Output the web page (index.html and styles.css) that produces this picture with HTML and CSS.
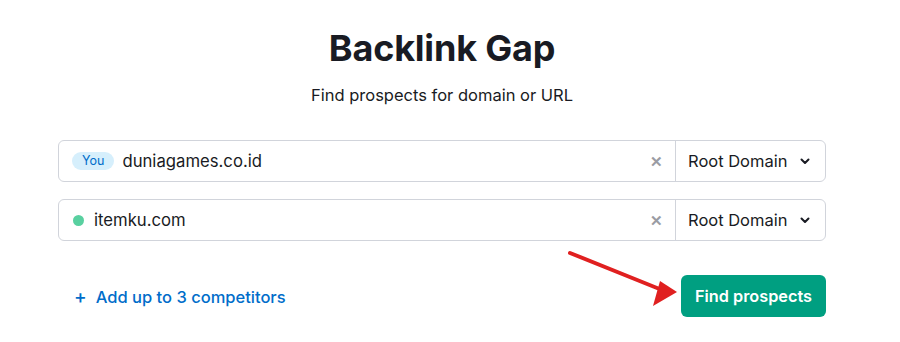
FILE: index.html
```html
<!DOCTYPE html>
<html lang="en">
<head>
    <meta charset="UTF-8">
    <title>Backlink Gap</title>
    <link rel="stylesheet" href="styles.css">
</head>
<body>
    <div class="page">
        <h1 class="title">Backlink Gap</h1>
        <p class="subtitle">Find prospects for domain or URL</p>

        <div class="domainRow">
            <div class="domainInput">
                <span class="badge">You</span>
                <span class="domainText">duniagames.co.id</span>
                <span class="clear">&#x2715;</span>
            </div>
            <div class="typeSelect">
                <span>Root Domain</span>
                <svg class="chevron" width="10" height="7" viewBox="0 0 10 7"><path d="M1.5 1.5l3.5 3.5 3.5-3.5" fill="none" stroke="#191b23" stroke-width="2" stroke-linecap="round" stroke-linejoin="round"/></svg>
            </div>
        </div>

        <div class="domainRow">
            <div class="domainInput">
                <span class="dot"></span>
                <span class="domainText">itemku.com</span>
                <span class="clear">&#x2715;</span>
            </div>
            <div class="typeSelect">
                <span>Root Domain</span>
                <svg class="chevron" width="10" height="7" viewBox="0 0 10 7"><path d="M1.5 1.5l3.5 3.5 3.5-3.5" fill="none" stroke="#191b23" stroke-width="2" stroke-linecap="round" stroke-linejoin="round"/></svg>
            </div>
        </div>

        <div class="actions">
            <a class="addLink" href="#"><span class="plus">+</span>Add up to 3 competitors</a>
            <button class="findBtn">Find prospects</button>
        </div>
    </div>

    <!-- fleche rouge d'annotation -->
    <svg class="arrow" width="120" height="62" viewBox="0 0 120 62">
        <line x1="4" y1="4" x2="96" y2="41" stroke="#e02020" stroke-width="4" stroke-linecap="round"/>
        <polygon points="111,43 87,57 94,32" fill="#e02020"/>
    </svg>
</body>
</html>
```

FILE: styles.css
```css
body {
    margin: 0;
    background: #fff;
    font-family: Inter, "Noto Sans", sans-serif;
    color: #191b23;
    position: relative;
}
.page {
    width: 768px;
    margin-left: 58px;
    padding-top: 26px;
}
.title {
    margin: 0;
    text-align: center;
    font-size: 36px;
    font-weight: 700;
    line-height: 44px;
    letter-spacing: -0.2px;
}
.subtitle {
    margin: 14px 0 34px;
    text-align: center;
    font-size: 16.5px;
    line-height: 22px;
}
.domainRow {
    display: flex;
    height: 42px;
    border: 1px solid #d1d4db;
    border-radius: 6px;
    box-sizing: border-box;
    margin-bottom: 17px;
}
.domainInput {
    flex: 1;
    display: flex;
    align-items: center;
    padding: 0 12px 0 13px;
}
.badge {
    background: #d6effc;
    color: #006dca;
    font-size: 12.5px;
    line-height: 18px;
    padding: 0 10px;
    border-radius: 9px;
    margin-right: 8px;
}
.dot {
    width: 11px;
    height: 11px;
    border-radius: 50%;
    background: #59d0a0;
    margin: 0 10px 0 1px;
}
.domainText {
    flex: 1;
    font-size: 16.7px;
}
.clear {
    color: #9a9ca3;
    font-size: 15px;
    font-weight: 600;
}
.typeSelect {
    width: 150px;
    box-sizing: border-box;
    border-left: 1px solid #d1d4db;
    display: flex;
    align-items: center;
    justify-content: space-between;
    padding: 0 15px 0 12px;
    font-size: 16.5px;
}
.actions {
    display: flex;
    justify-content: space-between;
    align-items: center;
    margin-top: 34px;
}
.addLink {
    color: #006dca;
    text-decoration: none;
    font-size: 16.5px;
    font-weight: 500;
    padding-left: 16px;
}
.plus {
    font-size: 19px;
    margin-right: 9px;
}
.findBtn {
    background: #009f81;
    color: #fff;
    border: none;
    border-radius: 6px;
    height: 42px;
    padding: 0 14px;
    font-family: inherit;
    font-size: 16.3px;
    font-weight: 600;
}
.arrow {
    position: absolute;
    left: 566px;
    top: 249px;
}
```
